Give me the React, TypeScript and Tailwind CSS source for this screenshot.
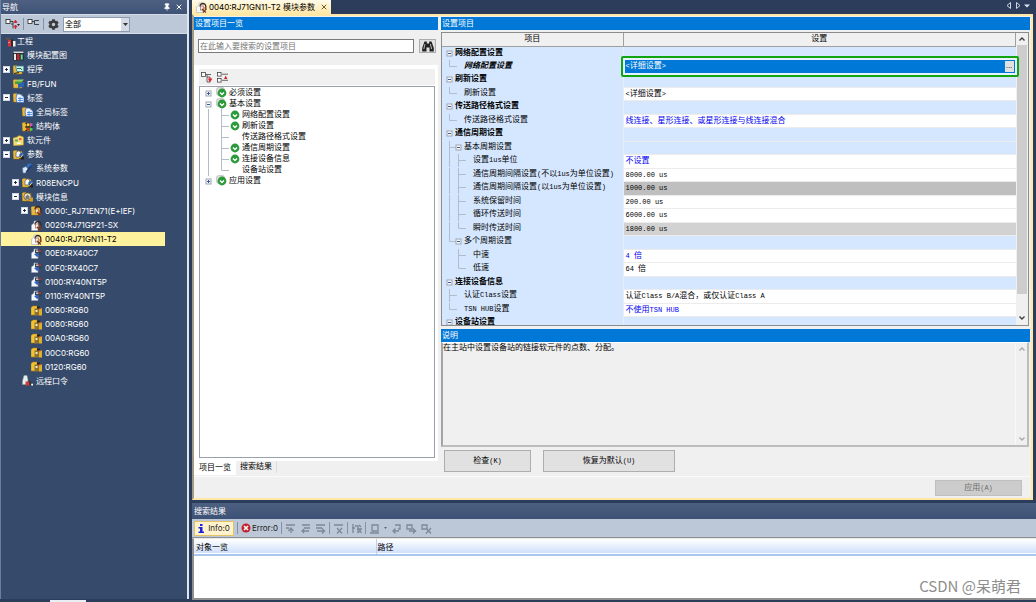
import React, { useState } from "react";
import { clsx } from "clsx";
import { Pin, X } from "lucide-react";
import { FaCog } from "react-icons/fa";

/* ---------- icons ---------- */

type NavIconKind =
  | "project" | "diagram" | "program" | "fb" | "label" | "struct" | "device"
  | "param" | "sysparam" | "modules" | "goldModule" | "module" | "io" | "unit" | "password";

function Folder() {
  return <path d="M0 2.5 L1 1.5 H4 L5 2.5 H9 V10 H0.5 Z" fill="#e9b93c" stroke="#a87812" strokeWidth="0.5" />;
}

function Page() {
  return <path d="M0.5 5 L3 3 V1 H7 V10.5 H0.5 Z" fill="#f4f7fb" stroke="#9aa7b8" strokeWidth="0.5" />;
}

function NavIcon({ kind }: { kind: NavIconKind }) {
  return (
    <svg viewBox="0 0 11 11" className="w-[11px] h-[11px] shrink-0" aria-hidden="true">
      {kind === "project" && (
        <>
          <path d="M0 3 L3 1 L6 3 L4 5 Z" fill="#5a5148" />
          <rect x="3" y="4" width="3" height="6.5" fill="#d8323a" />
          <rect x="6" y="3.5" width="2" height="7" fill="#2b2b2b" />
          <rect x="8" y="5" width="2.5" height="5.5" fill="#f0f0f0" />
          <rect x="3.5" y="6" width="1" height="1" fill="#fff" />
        </>
      )}
      {kind === "diagram" && (
        <>
          <rect x="0" y="1" width="11" height="9.5" fill="#2d2f33" />
          <rect x="0.5" y="1.5" width="10" height="1.5" fill="#d9dde2" />
          <rect x="1" y="4" width="2" height="6" fill="#e9e9e9" />
          <rect x="4" y="4" width="2.5" height="6" fill="#c8242c" />
          <rect x="7.5" y="4" width="2.5" height="6" fill="#1f8f58" />
          <rect x="8.5" y="5" width="0.7" height="4" fill="#fff" />
        </>
      )}
      {kind === "program" && (
        <>
          <Folder />
          <path d="M2.5 2 H10.8 V7.5 H4 Z" fill="#d4f0ec" stroke="#2c7f86" strokeWidth="0.8" />
          <path d="M4 4.5 H8 L9 6" fill="none" stroke="#1c6f56" strokeWidth="1" />
          <path d="M1 9.5 L6 8.5" stroke="#222" strokeWidth="1.1" />
        </>
      )}
      {kind === "fb" && (
        <>
          <Folder />
          <path d="M2 3.5 L5 1.5 H11 L9 3.5 Z" fill="#8fd06a" />
          <path d="M2 3.5 H9 V6 H2 Z" fill="#3e9c46" />
          <path d="M5 6 L11 4 V8.5 L5 10 Z" fill="#2a62b8" />
        </>
      )}
      {kind === "label" && (
        <>
          <Folder />
          <path d="M3 6 L4 2 H7 L11 5 V10.5 H4 Z" fill="#e8f1ff" stroke="#2b63c0" strokeWidth="0.7" />
          <path d="M5 6.5 H10 M5 8.5 H10 M7 5 V10" stroke="#3a7be0" strokeWidth="0.8" />
        </>
      )}
      {kind === "struct" && (
        <>
          <Folder />
          <path d="M3.5 2.5 H5 V9.5 H3.5 M7 2 V10 M3 6 H11" stroke="#1d1d1d" strokeWidth="1" fill="none" />
          <rect x="5" y="2.5" width="2.2" height="2.4" fill="#f2dd38" />
          <rect x="8" y="2.5" width="2.4" height="2.4" fill="#e04ad0" />
          <rect x="5" y="7" width="2.2" height="2.6" fill="#e03030" />
          <rect x="8" y="7" width="2.4" height="2.6" fill="#48d048" />
        </>
      )}
      {kind === "device" && (
        <>
          <path d="M0 3 L4 2 L6 0.5 L10.5 2 V10 L0.5 10.8 Z" fill="#f3dc74" stroke="#b18c1c" strokeWidth="0.5" />
          <rect x="2" y="4.5" width="3" height="2" fill="#58b158" />
          <rect x="6" y="3" width="2.5" height="2" fill="#e2604c" />
          <rect x="4" y="7.5" width="3.5" height="1.5" fill="#fff" />
        </>
      )}
      {kind === "param" && (
        <>
          <Folder />
          <path d="M3 3.5 L6 1.5 L8 4 L6 8 H3 Z" fill="#f7f7f7" stroke="#3c4a60" strokeWidth="0.6" />
          <path d="M6.5 5 L10.5 3 V7 L7 9 Z" fill="#2e63b8" />
          <path d="M6 10 L8 7.5 H11 V10.5 H7 Z" fill="#202020" />
          <path d="M7 9.5 L10 5.5" stroke="#f1d96a" strokeWidth="0.9" />
        </>
      )}
      {kind === "sysparam" && (
        <>
          <path d="M0.5 5 L4 3.5 L6 6 L4 10 H1 Z" fill="#dce9fa" stroke="#5c7da8" strokeWidth="0.6" />
          <path d="M5 1 L10 0.5 L8 4 L5 5 Z" fill="#2d6fc4" />
          <path d="M4 9.5 L9 3" stroke="#173a70" strokeWidth="1.3" />
        </>
      )}
      {kind === "modules" && (
        <>
          <Folder />
          <circle cx="5.5" cy="5.5" r="3.6" fill="#e9e6dc" stroke="#6b5416" strokeWidth="0.8" />
          <path d="M3.5 5.5 L5.5 3.5 L7.5 5.5 V8 H3.5 Z" fill="#75797f" />
          <rect x="8" y="6.5" width="3" height="4" fill="#d59e20" />
        </>
      )}
      {(kind === "goldModule" || kind === "module") && (
        <>
          {kind === "goldModule" ? <Folder /> : <Page />}
          <path d="M4 4.5 C4 0.5 9.8 0.5 9.8 4.5 V8" fill="none" stroke="#3b2a20" strokeWidth="1.3" />
          <rect x="4.5" y="4" width="3" height="4" fill="#f3e6d6" stroke="#803b28" strokeWidth="0.5" />
          <path d="M6 7 L10 10.5 M10 7 L7 10.5" stroke="#7a3a1c" strokeWidth="1.2" />
          <circle cx="9" cy="6" r="0.8" fill="#d8322a" />
        </>
      )}
      {kind === "io" && (
        <>
          <Page />
          <path d="M4 1.5 H10.5 V6.5 H7 L4 5 Z" fill="#3b3f48" />
          <path d="M3 6 L8 4.5 L6.5 9.5 Z" fill="#2d63c4" />
          <circle cx="9" cy="3" r="0.9" fill="#d8322a" />
          <rect x="5" y="2.6" width="2.4" height="1.2" fill="#e3e7ee" />
        </>
      )}
      {kind === "unit" && (
        <>
          <path d="M0 2.5 L2 1 H6 V10 H0 Z" fill="#f3c22e" stroke="#a87812" strokeWidth="0.5" />
          <rect x="3.5" y="3.5" width="4.5" height="7" fill="#8a7434" />
          <rect x="4.5" y="5" width="2" height="2" fill="#efe7c8" />
          <path d="M6 1.5 H9 V3.5 H6 Z" fill="#262626" />
          <rect x="8" y="3.5" width="3" height="7" fill="#e2ad27" />
          <rect x="8" y="3" width="1.4" height="1.4" fill="#d8322a" />
        </>
      )}
      {kind === "password" && (
        <>
          <path d="M2 0.5 H5 L6 5 L5 9.5 H0.5 V6 Z" fill="#e8f0ee" stroke="#8aa39c" strokeWidth="0.5" />
          <rect x="3.5" y="6.5" width="4" height="4" fill="#d33b38" />
          <path d="M6.5 5 L10.5 8 V10.5 H7.5 Z" fill="#35383e" />
          <rect x="9.2" y="8.7" width="1.8" height="1.8" fill="#fff" />
        </>
      )}
    </svg>
  );
}

function CheckBadge({ stacked }: { stacked?: boolean }) {
  return (
    <svg viewBox="0 0 11 11" className="w-[11px] h-[11px] shrink-0" aria-hidden="true">
      {stacked && <rect x="0.5" y="0.5" width="8" height="8" rx="2" fill="#dcdcdc" stroke="#b4b4b4" strokeWidth="0.6" />}
      <circle cx="6" cy="6" r="4.4" fill="#2a9a3a" />
      <path d="M4 5.4 L6 7.4 L8 5.4" fill="none" stroke="#fff" strokeWidth="1.4" />
    </svg>
  );
}

function Binoculars() {
  return (
    <svg viewBox="0 0 12 11" className="w-3 h-[11px]" fill="#222" aria-hidden="true">
      <path d="M2.5 0.5 H4.8 V2.5 H7.2 V0.5 H9.5 L11.8 7 V10.5 H7.5 V6.5 H4.5 V10.5 H0.2 V7 Z" />
      <path d="M1.8 8 L3 3 M9.6 8 L8.4 3" stroke="#ddd" strokeWidth="0.8" />
    </svg>
  );
}

function PlusMinus({ open }: { open?: boolean }) {
  return (
    <svg viewBox="0 0 7 7" className="w-[7px] h-[7px] shrink-0" aria-hidden="true">
      <rect x="0.5" y="0.5" width="6" height="6" fill="#fff" stroke="#cfd6e2" strokeWidth="1" />
      <path d={open ? "M2 3.5 H5" : "M2 3.5 H5 M3.5 2 V5"} stroke="#1d2b45" strokeWidth="1" />
    </svg>
  );
}

/* ---------- navigation tree ---------- */

type NavRow = { label: string; level: number; icon: NavIconKind; open?: boolean };

const NAV: NavRow[] = [
  { label: "工程", level: 0, icon: "project" },
  { label: "模块配置图", level: 1, icon: "diagram" },
  { label: "程序", level: 1, icon: "program", open: false },
  { label: "FB/FUN", level: 1, icon: "fb" },
  { label: "标签", level: 1, icon: "label", open: true },
  { label: "全局标签", level: 2, icon: "label" },
  { label: "结构体", level: 2, icon: "struct" },
  { label: "软元件", level: 1, icon: "device", open: false },
  { label: "参数", level: 1, icon: "param", open: true },
  { label: "系统参数", level: 2, icon: "sysparam" },
  { label: "R08ENCPU", level: 2, icon: "param", open: false },
  { label: "模块信息", level: 2, icon: "modules", open: true },
  { label: "0000:_RJ71EN71(E+IEF)", level: 3, icon: "goldModule", open: false },
  { label: "0020:RJ71GP21-SX", level: 3, icon: "module" },
  { label: "0040:RJ71GN11-T2", level: 3, icon: "module" },
  { label: "00E0:RX40C7", level: 3, icon: "io" },
  { label: "00F0:RX40C7", level: 3, icon: "io" },
  { label: "0100:RY40NT5P", level: 3, icon: "io" },
  { label: "0110:RY40NT5P", level: 3, icon: "io" },
  { label: "0060:RG60", level: 3, icon: "unit" },
  { label: "0080:RG60", level: 3, icon: "unit" },
  { label: "00A0:RG60", level: 3, icon: "unit" },
  { label: "00C0:RG60", level: 3, icon: "unit" },
  { label: "0120:RG60", level: 3, icon: "unit" },
  { label: "远程口令", level: 2, icon: "password" },
];

const NAV_INDENT = ["pl-[4px]", "pl-[2px]", "pl-[11px]", "pl-[20px]"];

function NavPanel() {
  const [selected, setSelected] = useState("0040:RJ71GN11-T2");

  return (
    <aside className="w-[189px] shrink-0 flex flex-col font-['Inter','Noto_Sans_CJK_SC',sans-serif] text-[8px]">
      <div className="flex-1 min-h-0 flex flex-col border-l border-[#6b7f9e] border-r-2 border-r-[#dfe5ee] bg-[#364b6b]">
        <header className="h-[14px] pl-px pr-1 flex items-center justify-between bg-linear-to-b from-[#4d6082] to-[#3f5377] text-white">
          <h2>导航</h2>
          <div className="flex items-center gap-1">
            <button aria-label="固定"><Pin className="w-2 h-2" fill="currentColor" /></button>
            <button aria-label="关闭"><X className="w-2 h-2" strokeWidth={3} /></button>
          </div>
        </header>
        <div className="h-[20px] px-1 flex items-center gap-[3px] bg-[#bcc7d8] border-y border-[#d5dce8]">
          <button aria-label="展开" className="w-[15px]">
            <svg viewBox="0 0 15 12" className="w-[15px] h-3" fill="none">
              <rect x="1" y="1.5" width="4" height="4" fill="#fff" stroke="#222" strokeWidth="0.8" />
              <path d="M5 3.5 H8 V10.5 M6 6 H8" stroke="#333" strokeWidth="0.9" />
              <path d="M10.5 2 V5 M10.5 7 V11 M8.8 4 H12.2 M8.8 8.5 H12.2" stroke="#d8242c" strokeWidth="1.3" />
              <path d="M12 6 H15 L13.5 8 Z" fill="#222" />
            </svg>
          </button>
          <span className="w-px h-3 bg-[#8591a6]" />
          <button aria-label="折叠" className="w-[13px]">
            <svg viewBox="0 0 13 12" className="w-[13px] h-3" fill="none">
              <rect x="1" y="1.5" width="4" height="4" fill="#fff" stroke="#222" strokeWidth="0.8" />
              <path d="M5 3.5 H7 M12 2.5 H7.5 V6.5 H12" stroke="#333" strokeWidth="0.9" />
            </svg>
          </button>
          <span className="w-px h-3 bg-[#8591a6]" />
          <button aria-label="设置" className="px-px"><FaCog className="w-[11px] h-[11px] text-[#3a3a3a]" /></button>
          <div className="relative w-[67px] h-[15px] border border-[#8e9bb0] bg-white text-black">
            <select aria-label="显示范围" className="block w-full h-full appearance-none pl-px leading-[13px] outline-none">
              <option>全部</option>
            </select>
            <span className="pointer-events-none absolute right-0 top-0 w-2 h-full bg-[#d5dbe6] flex items-center justify-center">
              <svg viewBox="0 0 5 3" className="w-[5px] h-[3px]"><path d="M0 0 H5 L2.5 3 Z" fill="#333" /></svg>
            </span>
          </div>
        </div>
        <ul className="h-[354px] flex flex-col text-white">
          {NAV.map((row) => (
            <li key={row.label} className="flex-1 flex">
              <button
                onClick={() => setSelected(row.label)}
                className={clsx(
                  "w-[164px] flex items-center whitespace-nowrap text-left",
                  NAV_INDENT[row.level],
                  selected === row.label && "bg-[#fff29d] text-black",
                )}
              >
                {row.level > 0 && (
                  <span className="w-[10px] shrink-0">
                    {row.open !== undefined && <PlusMinus open={row.open} />}
                  </span>
                )}
                <NavIcon kind={row.icon} />
                <span className={row.level === 0 ? "ml-px" : "ml-[3px]"}>{row.label}</span>
              </button>
            </li>
          ))}
        </ul>
      </div>
      <div className="h-[3px] shrink-0 pt-px pl-[50px]">
        <div className="w-9 h-[2px] bg-[#e9edf4]" />
      </div>
    </aside>
  );
}

/* ---------- item list ---------- */

type Guide = "box" | "boxClosed" | "tee" | "ell" | "line" | "blank";

function GuideCell({ kind, height = 12 }: { kind: Guide; height?: number }) {
  const mid = 6;
  return (
    <svg width="9" height={height} className="shrink-0 overflow-visible" fill="none" stroke="#b3bccb" strokeWidth="1" aria-hidden="true">
      {kind === "tee" && <path d={`M4.5 0 V${height + 1} M4.5 ${mid}.5 H12`} />}
      {kind === "ell" && <path d={`M4.5 0 V${mid}.5 H12`} />}
      {kind === "line" && <path d={`M4.5 0 V${height + 1}`} />}
      {(kind === "box" || kind === "boxClosed") && (
        <>
          <rect x="2" y={mid - 2} width="5" height="5" fill="#f8f9fb" stroke="#9da4b0" />
          <path d={`M3 ${mid}.5 H6`} stroke="#3c59a0" />
          {kind === "boxClosed" && <path d={`M4.5 ${mid - 1} V${mid + 2}`} stroke="#3c59a0" />}
        </>
      )}
    </svg>
  );
}

type ListRow = { label: string; guides: Guide[]; checked: boolean; stacked?: boolean };

const LIST: ListRow[] = [
  { label: "必须设置", guides: ["boxClosed"], checked: true, stacked: true },
  { label: "基本设置", guides: ["box"], checked: true, stacked: true },
  { label: "网络配置设置", guides: ["line", "tee"], checked: true },
  { label: "刷新设置", guides: ["line", "tee"], checked: true },
  { label: "传送路径格式设置", guides: ["line", "tee"], checked: false },
  { label: "通信周期设置", guides: ["line", "tee"], checked: true },
  { label: "连接设备信息", guides: ["line", "tee"], checked: true },
  { label: "设备站设置", guides: ["line", "ell"], checked: false },
  { label: "应用设置", guides: ["boxClosed"], checked: true, stacked: true },
];

function PanelTitle({ children }: { children: React.ReactNode }) {
  return (
    <h2 className="h-[13px] shrink-0 px-px bg-[#0078d7] text-white text-[8px] leading-[13px]">{children}</h2>
  );
}

function ItemList() {
  return (
    <section className="w-[244px] shrink-0 flex flex-col">
      <PanelTitle>设置项目一览</PanelTitle>
      <form className="h-[35px] pl-1 pr-[2px] pt-[9px] flex items-start gap-[5px]" onSubmit={(e) => e.preventDefault()}>
        <input
          type="text"
          aria-label="搜索设置项目"
          placeholder="在此输入要搜索的设置项目"
          className="flex-1 h-[14px] border border-[#7a7a7a] bg-white px-px placeholder:text-[#757575] outline-none"
        />
        <button aria-label="搜索" className="w-[17px] h-[14px] bg-[#e1e1e1] border border-[#adadad] flex items-center justify-center">
          <Binoculars />
        </button>
      </form>
      <div className="flex-1 flex flex-col bg-white pl-[5px] pr-[3px] pt-1 pb-[3px]">
        <div className="h-4 pl-[2px] flex items-center gap-[4px] bg-[#f0f0f0]">
          <button aria-label="全部展开">
            <svg viewBox="0 0 12 11" className="w-3 h-[11px]" fill="none">
              <rect x="0.5" y="0.5" width="4" height="4" fill="#fff" stroke="#444" strokeWidth="0.8" />
              <path d="M4.5 2.5 H10 M6 2.5 V10 H9 M6 5 H9" stroke="#444" strokeWidth="0.8" />
              <path d="M9 5 V8 M7.8 7 L9 9.5 L10.4 7 Z" stroke="#d8242c" strokeWidth="1.1" fill="#d8242c" />
            </svg>
          </button>
          <button aria-label="全部折叠">
            <svg viewBox="0 0 12 11" className="w-3 h-[11px]" fill="none">
              <rect x="0.5" y="0.5" width="3.6" height="3.6" fill="#fff" stroke="#444" strokeWidth="0.8" />
              <rect x="0.5" y="6.5" width="3.6" height="3.6" fill="#fff" stroke="#444" strokeWidth="0.8" />
              <path d="M5 2.2 H11 M5 8.3 H11" stroke="#444" strokeWidth="0.8" />
              <path d="M7 7 L8.7 3.6 L10.4 7 Z" fill="#d8242c" />
            </svg>
          </button>
        </div>
        <ul className="mt-px flex-1 border border-[#9aa0aa] pl-1">
          {LIST.map((row) => (
            <li key={row.label} className="h-[11px] flex items-center leading-[11px]">
              {row.guides.map((g, i) => (
                <React.Fragment key={i}>
                  {i > 0 && <span className="w-1 shrink-0" />}
                  <GuideCell kind={g} height={11} />
                </React.Fragment>
              ))}
              <span className="w-[13px] shrink-0 ml-[3px]">{row.checked && <CheckBadge stacked={row.stacked} />}</span>
              <span>{row.label}</span>
            </li>
          ))}
        </ul>
      </div>
      <div className="h-[15px] flex items-start" role="tablist">
        <button role="tab" aria-selected="true" className="h-[14px] px-[5px] bg-white">项目一览</button>
        <button role="tab" aria-selected="false" className="h-3 px-1 border-r border-[#dcdcdc]">搜索结果</button>
      </div>
    </section>
  );
}

/* ---------- parameter table ---------- */

type Tone = "group" | "white" | "gray" | "lightGray" | "selected";
type ParamRow = { label: string; guides: Guide[]; value?: string; tone: Tone; blue?: boolean; head?: boolean };

const PARAMS: ParamRow[] = [
  { label: "网络配置设置", guides: ["box"], tone: "group", head: true },
  { label: "网络配置设置", guides: ["ell", "blank"], value: "<详细设置>", tone: "selected" },
  { label: "刷新设置", guides: ["box"], tone: "group", head: true },
  { label: "刷新设置", guides: ["ell", "blank"], value: "<详细设置>", tone: "white" },
  { label: "传送路径格式设置", guides: ["box"], tone: "group", head: true },
  { label: "传送路径格式设置", guides: ["ell", "blank"], value: "线连接、星形连接、或星形连接与线连接混合", tone: "white", blue: true },
  { label: "通信周期设置", guides: ["box"], tone: "group", head: true },
  { label: "基本周期设置", guides: ["tee", "box"], tone: "group" },
  { label: "设置1us单位", guides: ["line", "tee", "blank"], value: "不设置", tone: "white", blue: true },
  { label: "通信周期间隔设置(不以1us为单位设置)", guides: ["line", "tee", "blank"], value: "8000.00 us", tone: "white" },
  { label: "通信周期间隔设置(以1us为单位设置)", guides: ["line", "tee", "blank"], value: "1000.00 us", tone: "gray" },
  { label: "系统保留时间", guides: ["line", "tee", "blank"], value: "200.00 us", tone: "white" },
  { label: "循环传送时间", guides: ["line", "tee", "blank"], value: "6000.00 us", tone: "white" },
  { label: "瞬时传送时间", guides: ["line", "ell", "blank"], value: "1800.00 us", tone: "lightGray" },
  { label: "多个周期设置", guides: ["ell", "box"], tone: "group" },
  { label: "中速", guides: ["blank", "tee", "blank"], value: "4 倍", tone: "white", blue: true },
  { label: "低速", guides: ["blank", "ell", "blank"], value: "64 倍", tone: "white" },
  { label: "连接设备信息", guides: ["box"], tone: "group", head: true },
  { label: "认证Class设置", guides: ["tee", "blank"], value: "认证Class B/A混合，或仅认证Class A", tone: "white" },
  { label: "TSN HUB设置", guides: ["ell", "blank"], value: "不使用TSN HUB", tone: "white", blue: true },
  { label: "设备站设置", guides: ["box"], tone: "group", head: true },
];

const TONES: Record<Tone, string> = {
  group: "bg-[#d5e7ff]",
  white: "bg-white",
  gray: "bg-[#bfbfbf]",
  lightGray: "bg-[#d2d2d2]",
  selected: "bg-[#d5e7ff]",
};

// Latin runs are set in a half-width mono face, CJK keeps the full em
function Mixed({ text }: { text: string }) {
  return (
    <>
      {text.split(/([\x20-\x7e]+)/).map((part, i) =>
        i % 2 ? <span key={i} className="whitespace-pre text-[7px] font-['Liberation_Mono',monospace]">{part}</span> : part,
      )}
    </>
  );
}

function Chevron({ up, faint }: { up?: boolean; faint?: boolean }) {
  return (
    <svg viewBox="0 0 6 4" className="w-[6px] h-1" fill="none" stroke={faint ? "#a8a8a8" : "#404040"} strokeWidth="1.4">
      <path d={up ? "M0.5 3.5 L3 1 L5.5 3.5" : "M0.5 0.5 L3 3 L5.5 0.5"} />
    </svg>
  );
}

function ParamTable() {
  return (
    <div className="flex-1 min-h-0 mt-[2px] mr-px flex border border-[#8c8c8c] bg-[#d5e7ff] overflow-hidden">
      <div className="flex-1">
        <table className="w-full table-fixed border-collapse">
          <colgroup>
            <col className="w-[181px]" />
            <col />
          </colgroup>
          <thead>
            <tr className="h-[13px] bg-[#f0f0f0] leading-3">
              <th className="p-0 font-normal border-r border-b border-[#a0a0a0]">项目</th>
              <th className="p-0 font-normal border-r border-b border-[#a0a0a0]">设置</th>
            </tr>
          </thead>
          <tbody>
            {PARAMS.map((row, i) => (
              <tr key={i} className="odd:h-[14px] even:h-[13px] align-top">
                <td className="p-0 pl-[3px] bg-[#d5e7ff] border-r border-[#e6eefa]">
                  <div className="h-3 flex items-start whitespace-nowrap leading-[11px]">
                    {row.guides.map((g, n) => (
                      <GuideCell key={n} kind={g} />
                    ))}
                    <span className={clsx("ml-px", row.head && "font-bold", row.tone === "selected" && "font-bold italic")}>
                      <Mixed text={row.label} />
                    </span>
                  </div>
                </td>
                <td className={clsx("p-0 pl-[2px] border-b border-[#ececec]", TONES[row.tone], row.blue && "text-[#0000f0]", row.tone === "selected" && "relative")}>
                  {row.tone === "selected" ? (
                    <div className="absolute z-10 -left-[3px] -right-[3px] -top-[5px] h-[21px] rounded-[2px] border-2 border-[#12a512] bg-[#e8f2ff] p-[2px] flex">
                      <div className="flex-1 bg-[#0078d7] text-white leading-[12px] pl-px"><Mixed text={row.value ?? ""} /></div>
                      <button aria-label="打开详细设置" className="w-[11px] border border-[#0078d7] bg-[#e1e1e1] leading-[8px] text-black">...</button>
                    </div>
                  ) : (
                    <div className="h-3 leading-3 whitespace-nowrap"><Mixed text={row.value ?? ""} /></div>
                  )}
                </td>
              </tr>
            ))}
          </tbody>
        </table>
      </div>
      <div className="w-3 flex flex-col items-center bg-[#f0f0f0]">
        <span className="h-[12px] flex items-center"><Chevron up /></span>
        <span className="w-[10px] h-[249px] bg-[#cdcdcd]" />
        <span className="flex-1" />
        <span className="h-[14px] flex items-center"><Chevron /></span>
      </div>
    </div>
  );
}

function SettingsPane() {
  return (
    <section className="flex-1 min-w-0 flex flex-col">
      <PanelTitle>设置项目</PanelTitle>
      <ParamTable />
      <div className="h-[3px] shrink-0" />
      <PanelTitle>说明</PanelTitle>
      <div className="h-[105px] mr-px shrink-0 flex justify-between border-2 border-t border-[#bdbdbd] border-t-white border-l-[#a5a5a5]">
        <p className="leading-[10px]">在主站中设置设备站的链接软元件的点数、分配。</p>
        <div className="w-3 flex flex-col items-center justify-between py-1 border-l border-[#f8f8f8]">
          <Chevron up faint />
          <Chevron faint />
        </div>
      </div>
      <div className="h-[29px] shrink-0 pt-[3px] pl-[3px] flex items-start gap-3">
        <button className="w-[87px] h-[22px] bg-[#e1e1e1] border border-[#adadad]"><Mixed text="检查(K)" /></button>
        <button className="w-[132px] h-[22px] bg-[#e1e1e1] border border-[#adadad]"><Mixed text="恢复为默认(U)" /></button>
      </div>
    </section>
  );
}

/* ---------- document window ---------- */

function DocumentWindow() {
  return (
    <main className="flex-1 min-h-0 flex flex-col pr-[3px]">
      <div className="h-[14px] shrink-0 flex items-start justify-between">
        <div className="h-[14px] pl-1 pr-[3px] flex items-center gap-[2px] bg-linear-to-b from-[#fffbe8] to-[#ffe8a6] font-['Inter','Noto_Sans_CJK_SC',sans-serif]">
          <NavIcon kind="module" />
          <h1>0040:RJ71GN11-T2 模块参数</h1>
          <button aria-label="关闭标签" className="ml-[3px]"><X className="w-2 h-2 text-[#6d5a2c]" strokeWidth={3} /></button>
        </div>
        <div className="pt-[2px] pr-[3px] flex items-center gap-[3px]">
          <button aria-label="上一个"><svg viewBox="0 0 6 7" className="w-[6px] h-[7px]"><path d="M4.5 0.5 V6.5 L1 3.5 Z" fill="none" stroke="#cfd6e2" /></svg></button>
          <button aria-label="下一个"><svg viewBox="0 0 6 7" className="w-[6px] h-[7px]"><path d="M1.5 0.5 V6.5 L5 3.5 Z" fill="none" stroke="#cfd6e2" /></svg></button>
          <button aria-label="标签列表"><svg viewBox="0 0 6 4" className="w-[6px] h-1"><path d="M0 0.5 H6 L3 3.5 Z" fill="#e3e8f0" /></svg></button>
        </div>
      </div>
      <div className="flex-1 min-h-0 flex flex-col border-2 border-[#ffe8a6] border-l-[#a39a86] border-b-[#ffe8a6] bg-[#f0f0f0] pt-px pr-px">
        <div className="flex-1 min-h-0 flex gap-[3px]">
          <ItemList />
          <SettingsPane />
        </div>
        <div className="h-[22px] shrink-0 border-t border-[#fafafa] pt-[3px] pr-[8px] flex items-start justify-end">
          <button disabled className="w-[87px] h-4 bg-[#cccccc] border border-[#bfbfbf] text-[#6d6d6d]"><Mixed text="应用(A)" /></button>
        </div>
      </div>
    </main>
  );
}

/* ---------- search results ---------- */

const TOOL_GROUPS: { name: string; d: string }[][] = [
  [
    { name: "上一条", d: "M1 2 H10 M1 5 H4 M6 10 V6 M3.5 8 L6 5 L8.5 8" },
    { name: "跳转", d: "M2 2 H10 M4 5 H10 M2 8 H9 M4 6 L2 8 L4 10" },
    { name: "下一条", d: "M1 2 H10 M1 5 H7 M2 8 H9 M7 5.5 L9.5 8 L7 10.5" },
  ],
  [{ name: "清除", d: "M1 2 H10 M4 5 L9 10.5 M9 5 L4 10.5" }],
  [{ name: "查找", d: "M2 1 V10 M4 3 H7 V10 M1 5 H4 M8 2 L10 4 M6 6 H11 M8 6 L10.5 10 M10 6 L7 10" }],
  [
    { name: "书签", d: "M3 2 H9 V8 H3 Z M1 10 H10" },
    { name: "上一书签", d: "M4 2 H9 V6 H7 M8 8 H2 M4.5 5.5 L2 8 L4.5 10.5" },
    { name: "下一书签", d: "M1 2 H6 V6 H1 Z M3 8 H9 M7 5.5 L9.5 8 L7 10.5" },
    { name: "删除书签", d: "M1 2 H6 V6 H1 Z M5 5 L10 10.5 M10 5 L5 10.5" },
  ],
];

function ResultPane() {
  return (
    <section className="h-[99px] shrink-0 flex flex-col font-['Inter','Noto_Sans_CJK_SC',sans-serif]">
      <h2 className="h-4 shrink-0 pl-[2px] leading-4 bg-linear-to-b from-[#4d6082] to-[#3c5175] text-white">搜索结果</h2>
      <div className="h-[19px] shrink-0 pl-[2px] flex items-center gap-1 bg-[#bcc7d8] border-b border-[#8f8f8f] text-[#1b1b1b]">
        <button className="w-[40px] h-[15px] border border-[#e5c365] bg-[#fff3cd] flex items-center justify-center gap-1">
          <svg viewBox="0 0 6 9" className="w-[6px] h-[9px]" fill="#1a22e0"><path d="M2 0 H4.5 V2 H2 Z M0.5 3 H4.5 V7.5 H6 V9 H0.5 V7.5 H2 V4.5 H0.5 Z" /></svg>
          Info:0
        </button>
        <span className="w-px h-3 -mx-px bg-[#8591a6]" />
        <button className="flex items-center gap-px">
          <svg viewBox="0 0 10 10" className="w-[10px] h-[10px]"><circle cx="5" cy="5" r="4.5" fill="#c8202a" /><path d="M3 3 L7 7 M7 3 L3 7" stroke="#fff" strokeWidth="1.6" /></svg>
          Error:0
        </button>
        {TOOL_GROUPS.map((group, i) => (
          <React.Fragment key={i}>
            <span className="w-px h-3 -mx-px bg-[#8591a6]" />
            {group.map((tool, n) => (
              <button key={tool.name} aria-label={tool.name} className="flex items-center gap-1">
                <svg viewBox="0 0 11 11" className="w-[11px] h-[11px]" fill="none" stroke="#7f8895" strokeWidth="1.3"><path d={tool.d} /></svg>
                {i === 3 && n === 0 && <svg viewBox="0 0 3 2" className="w-[3px] h-[2px]"><path d="M0 0 H3 L1.5 2 Z" fill="#666" /></svg>}
              </button>
            ))}
          </React.Fragment>
        ))}
      </div>
      <div className="flex-1 mb-[2px] border-2 border-t border-[#8f8f8f] border-t-[#e8e8e8] border-r-0 bg-white">
        <table className="w-full table-fixed border-collapse text-left">
          <colgroup>
            <col className="w-[182px]" />
            <col />
          </colgroup>
          <thead>
            <tr className="h-4 bg-linear-to-b from-white to-[#cfe0fb] leading-3 border-b-2 border-[#a9c6ef]">
              <th className="p-0 pl-[2px] font-normal border-r border-[#b9d0f2]">对象一览</th>
              <th className="p-0 pl-px font-normal">路径</th>
            </tr>
          </thead>
        </table>
      </div>
    </section>
  );
}

export default function App() {
  return (
    <div className="relative h-screen w-full flex overflow-hidden bg-[#2c3d5b] text-black text-[8px] leading-3 font-['Liberation_Sans','Noto_Sans_CJK_SC',sans-serif]">
      <NavPanel />
      <div className="flex-1 min-w-0 ml-[3px] flex flex-col gap-[3px]">
        <DocumentWindow />
        <ResultPane />
      </div>
      <span className="absolute right-[15px] bottom-[5px] text-[15px] leading-[22px] text-[#8e8e8e] font-['Noto_Sans_CJK_SC',sans-serif]">CSDN @呆萌君</span>
    </div>
  );
}
